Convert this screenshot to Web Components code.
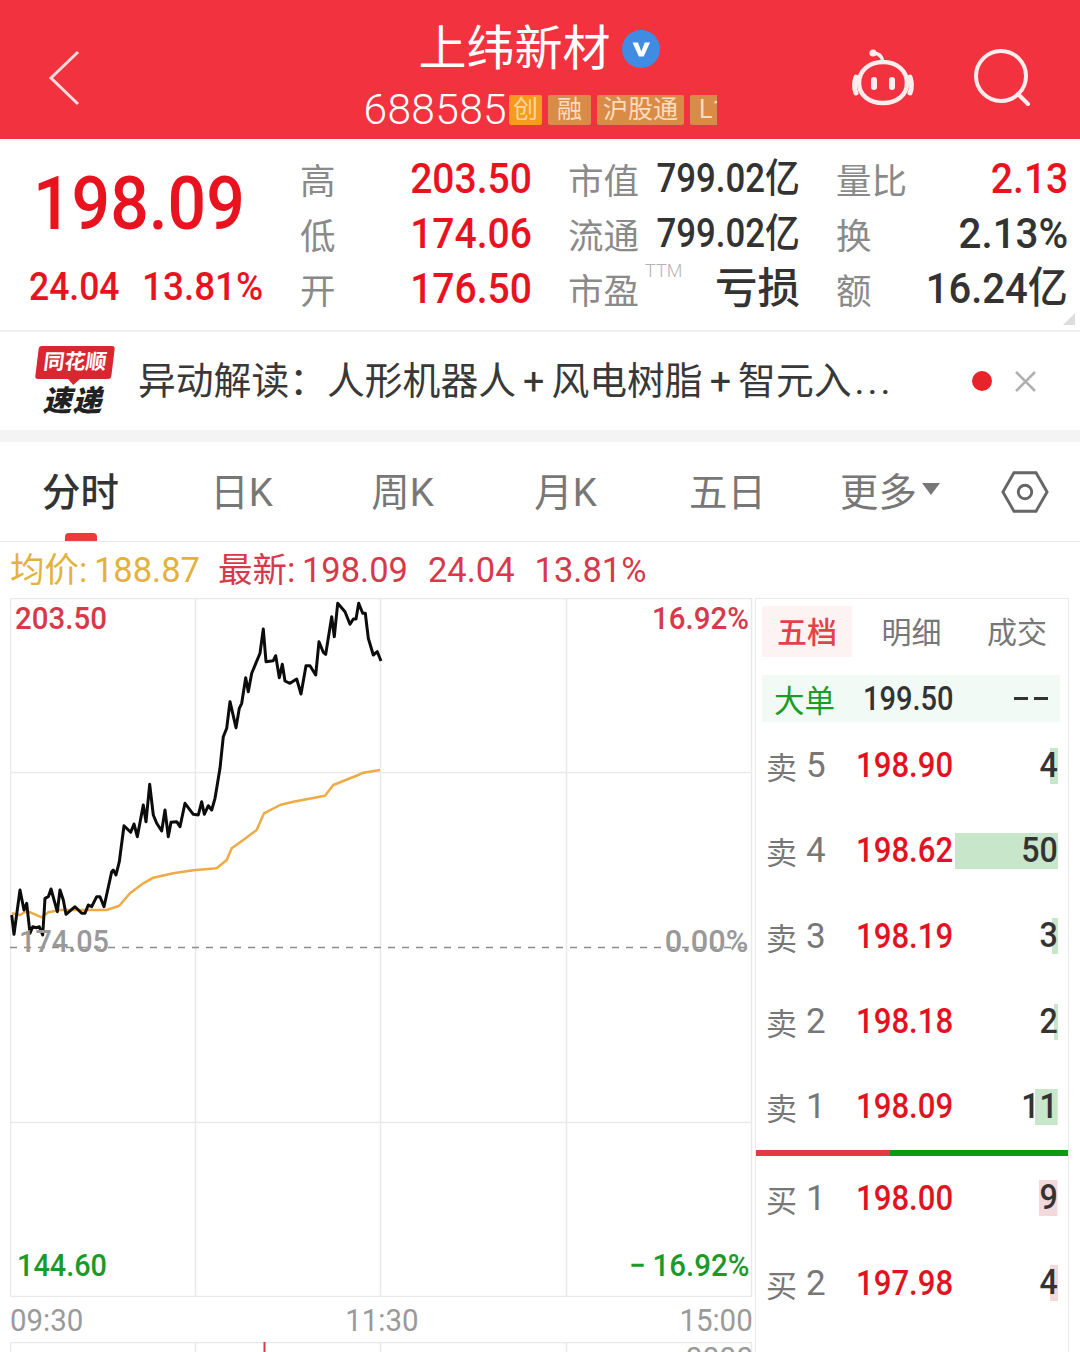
<!doctype html>
<html lang="zh">
<head>
<meta charset="utf-8">
<style>
  html, body { margin: 0; }
  body {
    width: 1080px;
    height: 1352px;
    overflow: hidden;
    background: #fff;
    font-family: Roboto, "Noto Sans CJK SC", sans-serif;
  }
  market-screen { display: block; }
</style>
</head>
<body>
<market-screen>
  <stock-header name="上纬新材" code="688585"></stock-header>
  <quote-panel>
    <quote-cell label="高" tone="up">203.50</quote-cell>
    <quote-cell label="市值" style="--value-size:40px;--value-x:.87">799.02亿</quote-cell>
    <quote-cell label="量比" tone="up" style="--value-x:.93">2.13</quote-cell>
    <quote-cell label="低" tone="up">174.06</quote-cell>
    <quote-cell label="流通" style="--value-size:40px;--value-x:.87">799.02亿</quote-cell>
    <quote-cell label="换" style="--value-x:.96">2.13%</quote-cell>
    <quote-cell label="开" tone="up">176.50</quote-cell>
    <quote-cell label="市盈" sup="TTM" style="--value-size:42.5px;--value-x:1">亏损</quote-cell>
    <quote-cell label="额" style="--value-size:43px;--value-x:.93">16.24亿</quote-cell>
  </quote-panel>
  <news-bar>异动解读：人形机器人<i>+</i>风电树脂<i>+</i>智元入<b>...</b></news-bar>
  <tab-bar></tab-bar>
  <chart-legend></chart-legend>
  <main-area>
    <time-chart slot="chart"></time-chart>
    <order-book slot="book">
      <book-row label="卖" level="5" vol="4" side="sell">198.90</book-row>
      <book-row label="卖" level="4" vol="50" side="sell">198.62</book-row>
      <book-row label="卖" level="3" vol="3" side="sell">198.19</book-row>
      <book-row label="卖" level="2" vol="2" side="sell">198.18</book-row>
      <book-row label="卖" level="1" vol="11" side="sell">198.09</book-row>
      <book-row slot="buy" label="买" level="1" vol="9" side="buy">198.00</book-row>
      <book-row slot="buy" label="买" level="2" vol="4" side="buy">197.98</book-row>
    </order-book>
  </main-area>
</market-screen>

<script>
function mount(el, html) {
  el.attachShadow({ mode: "open" }).innerHTML = html;
  return el.shadowRoot;
}

class MarketScreen extends HTMLElement {
  connectedCallback() {
    mount(this, `<style>:host{display:block}</style><slot></slot>`);
  }
}

class StockHeader extends HTMLElement {
  connectedCallback() {
    mount(this, `<style>
      :host {
        display: grid;
        grid-template-columns: 1fr auto 1fr;
        align-items: center;
        height: 139px;
        background: #f2323f;
        color: #fff;
        box-sizing: border-box;
        padding: 0 48px 0 46px;
      }
      .back { display: block; margin-top: 17px; }
      .mid { align-self: start; display: flex; flex-direction: column; align-items: center; margin-top: 26px; transform: translateX(2px); }
      .title { display: flex; align-items: center; gap: 10px; height: 46px; margin-left: -3px; }
      .title span { font-size: 48px; line-height: 46px; }
      .sub { display: flex; align-items: center; margin-top: 20px; height: 36px; width: 355px; }
      .code { font-size: 42.5px; line-height: 50px; font-weight: 300; letter-spacing: .35px; color: #fff; margin-right: 2px; }
      .tag {
        flex: none;
        height: 30px;
        margin-right: 6px;
        padding: 0 6px;
        border-radius: 2px;
        background: #d98c48;
        color: #f9dcc0;
        font-size: 25px;
        line-height: 30px;
        box-sizing: border-box;
      }
      .tag.first { background: #f79b1f; color: #fbd79c; padding: 0 4px; }
      .tag.one { padding: 0 9px; }
      /* the row runs out of room in the app, so the last tag is cut */
      .tag.clip { width: 27px; margin-right: 0; padding: 0 0 0 9px; overflow: hidden; white-space: nowrap; border-radius: 2px 0 0 2px; }
      .icons { justify-self: end; display: flex; align-items: center; gap: 58px; margin-top: 16px; }
    </style>
    <svg class="back" width="36" height="58" viewBox="0 0 36 58"><path d="M32 3 L5 29 L32 55" fill="none" stroke="#fbdcdc" stroke-width="3"/></svg>
    <div class="mid">
      <div class="title">
        <span>${this.getAttribute("name")}</span>
        <svg width="40" height="40" viewBox="0 0 40 40"><circle cx="20" cy="20" r="19" fill="#3f8ce2"/><path d="M11.5 13.5h5.5l3.3 9 3.4-9h5.3l-6.3 14h-4.8z" fill="#fff"/></svg>
      </div>
      <div class="sub">
        <span class="code">${this.getAttribute("code")}</span>
        <span class="tag first">创</span><span class="tag one">融</span><span class="tag">沪股通</span><span class="tag clip">L1</span>
      </div>
    </div>
    <div class="icons">
      <svg width="66" height="60" viewBox="0 0 66 60" fill="none" stroke="#fdeeee" stroke-width="4.5" stroke-linecap="round">
        <path d="M9 35c0-13 11-21 24-21s24 8 24 21c0 12-10 20-24 20S9 47 9 35z"/>
        <path d="M6 29c-2 6-2 11 0 16M60 29c2 6 2 11 0 16" stroke-width="5"/>
        <path d="M23 5c6 0 9 3 10 9" stroke-width="3.5"/>
        <circle cx="23" cy="5" r="3.6" fill="#fdeeee" stroke="none"/>
        <path d="M24 32v7M42 32v7" stroke-width="6"/>
      </svg>
      <svg width="58" height="58" viewBox="0 0 58 58" fill="none" stroke="#fdeeee" stroke-width="4"><circle cx="27" cy="27" r="25"/><path d="M44 45l10 10" stroke-linecap="round"/></svg>
    </div>`);
  }
}

class QuotePanel extends HTMLElement {
  connectedCallback() {
    mount(this, `<style>
      :host {
        display: grid;
        grid-template-columns: 301px 1fr;
        height: 193px;
        box-sizing: border-box;
        border-bottom: 2px solid #f0f0f0;
        position: relative;
      }
      .now { padding: 25px 0 0 29px; color: #e8131f; font-weight: 500; }
      .price { font-size: 75px; line-height: 78px; margin-left: 4px; transform: scaleX(.905); transform-origin: left; white-space: nowrap; }
      .chg { display: flex; margin-top: 25px; font-size: 39px; line-height: 40px; }
      .chg span { display: block; transform: scaleX(.945); transform-origin: left; white-space: nowrap; }
      .chg span:first-child { width: 113px; transform: scaleX(.91); }
      .grid {
        display: grid;
        grid-template-columns: 231px 231px 231px;
        column-gap: 37px;
        grid-auto-rows: 55px;
        padding-top: 12px;
      }
      .corner {
        position: absolute; right: 5px; bottom: 5px;
        width: 0; height: 0;
        border-left: 12px solid transparent;
        border-bottom: 12px solid #ddd;
      }
    </style>
    <div class="now">
      <div class="price">198.09</div>
      <div class="chg"><span>24.04</span><span>13.81%</span></div>
    </div>
    <div class="grid"><slot></slot></div>
    <div class="corner"></div>`);
  }
}

class QuoteCell extends HTMLElement {
  connectedCallback() {
    const sup = this.getAttribute("sup");
    const up = this.getAttribute("tone") === "up";
    mount(this, `<style>
      :host { display: flex; justify-content: space-between; align-items: center; min-width: 0; }
      .label { position: relative; font-size: 35.5px; line-height: 55px; color: #8a8a8a; padding-top: 7px; margin: 0 -20px 0 -1px; white-space: nowrap; }
      .sup { position: absolute; left: 77px; top: 1px; font-size: 18px; line-height: 24px; color: #b4b4b4; font-weight: 300; }
      .value {
        font-size: var(--value-size, 42px);
        line-height: 55px;
        font-weight: 500;
        color: ${up ? "#e8131f" : "#333"};
        white-space: nowrap;
        transform: scaleX(var(--value-x, .93));
        transform-origin: right;
      }
    </style>
    <span class="label">${this.getAttribute("label")}${sup ? `<span class="sup">${sup}</span>` : ""}</span>
    <span class="value"><slot></slot></span>`);
  }
}

class NewsBar extends HTMLElement {
  connectedCallback() {
    mount(this, `<style>
      :host {
        display: flex;
        align-items: center;
        height: 98px;
        box-sizing: border-box;
        padding: 0 43px 0 35px;
      }
      .logo { flex: none; width: 80px; display: flex; flex-direction: column; align-items: center; margin-right: 23px; padding-top: 2px; }
      .red {
        position: relative;
        width: 76px; height: 33px;
        background: #d9272f;
        border-radius: 3px;
        transform: skewX(-7deg);
        color: #fff;
        font-size: 21px;
        line-height: 33px;
        font-weight: 700;
        text-align: center;
        white-space: nowrap;
      }
      .red::after {
        content: "";
        position: absolute; left: 33px; bottom: -6px;
        border-left: 6px solid transparent;
        border-right: 6px solid transparent;
        border-top: 6px solid #d9272f;
      }
      .sd { font-size: 29px; line-height: 34px; font-weight: 900; font-style: italic; color: #222; margin: 5px 5px 0 0; letter-spacing: 1px; }
      .text { flex: 1; font-size: 37.8px; line-height: 48px; color: #383838; white-space: nowrap; }
      ::slotted(i) { font-style: normal; font-family: Roboto, sans-serif; margin: 0 7px; }
      ::slotted(b) { font-weight: 400; font-family: Roboto, sans-serif; letter-spacing: 3px; margin-left: 3px; }
      .dot { flex: none; width: 20px; height: 20px; border-radius: 50%; background: #e8232a; margin-right: 22px; }
    </style>
    <div class="logo"><div class="red">同花顺</div><div class="sd">速递</div></div>
    <div class="text"><slot></slot></div>
    <div class="dot"></div>
    <svg width="23" height="23" viewBox="0 0 23 23" stroke="#b0b0b0" stroke-width="2.6"><path d="M2 2l19 19M21 2L2 21"/></svg>`);
  }
}

class TabBar extends HTMLElement {
  connectedCallback() {
    const labels = ["分时", "日K", "周K", "月K", "五日"];
    mount(this, `<style>
      :host {
        display: grid;
        grid-template-columns: 161px 161px 161px 165px 159px 160px 1fr;
        align-items: center;
        height: 112px;
        box-sizing: border-box;
        border-top: 12px solid #f4f4f4;
        border-bottom: 1px solid #e8e8e8;
        font-size: 38.4px;
        color: #777;
      }
      .tab { position: relative; height: 99px; padding-bottom: 5px; box-sizing: border-box; display: flex; align-items: center; justify-content: center; }
      .on { color: #333; font-weight: 500; }
      .on::after {
        content: "";
        position: absolute; left: 65px; bottom: 0;
        width: 32px; height: 8px;
        background: #ee3a3a;
        border-radius: 4px 4px 0 0;
      }
      .more { gap: 5px; transform: translateX(3px); }
      .more i { border-left: 9px solid transparent; border-right: 9px solid transparent; border-top: 12px solid #777; }
      svg { justify-self: center; transform: translateX(1px); }
    </style>
    ${labels.map((t, i) => `<div class="tab${i ? "" : " on"}">${t}</div>`).join("")}
    <div class="tab more">更多<i></i></div>
    <svg width="48" height="44" viewBox="0 0 50 44" fill="none" stroke="#666" stroke-width="3"><path d="M2 22L13.500 2h23L48 22 36.500 42h-23z"/><circle cx="25" cy="22" r="7"/></svg>`);
  }
}

class ChartLegend extends HTMLElement {
  connectedCallback() {
    mount(this, `<style>
      :host {
        display: flex;
        align-items: center;
        height: 56px;
        padding: 0 0 0 10px;
        box-sizing: border-box;
        font-size: 34.5px;
        line-height: 50px;
        word-spacing: -2px;
        color: #d8394a;
        white-space: nowrap;
      }
      .avg { color: #e3b23c; margin-right: 18px; }
      .gap { margin-left: 20px; }
    </style>
    <span class="avg">均价: 188.87</span><span>最新: 198.09</span><span class="gap">24.04</span><span class="gap">13.81%</span>`);
  }
}

class MainArea extends HTMLElement {
  connectedCallback() {
    mount(this, `<style>
      :host { display: grid; grid-template-columns: 743px 314px; column-gap: 2px; padding-left: 10px; height: 754px; overflow: hidden; }
    </style>
    <slot name="chart"></slot><slot name="book"></slot>`);
  }
}

// traced off the picture, in 3x crop coords with origin at (0,595)
const PRICE_LINE = [35,960,42,1018,60,885,72,945,80,925,90,1015,98,995,110,998,118,995,128,1020,135,910,145,905,153,882,172,950,180,885,190,915,198,958,225,935,245,955,255,955,265,930,275,935,290,905,300,905,312,935,335,830,340,825,348,840,358,800,372,692,392,712,402,687,412,725,430,630,438,680,449,568,460,660,470,685,485,708,495,645,505,725,513,682,530,680,540,695,555,625,580,658,595,660,605,620,613,658,625,632,635,645,645,610,660,520,670,425,680,400,690,320,708,398,718,340,725,325,737,248,745,290,755,235,780,175,790,102,798,200,820,197,827,182,838,248,847,208,855,258,870,265,890,252,903,297,918,212,930,212,947,240,957,140,970,172,977,178,995,65,1003,125,1013,25,1035,50,1050,88,1060,72,1068,72,1076,25,1088,55,1096,55,1105,130,1120,180,1132,170,1143,198];
const AVG_LINE = [35,955,60,960,80,948,105,958,125,967,145,952,180,945,240,945,320,945,358,932,390,895,430,865,460,848,520,835,580,826,650,820,680,795,695,760,730,735,770,705,792,655,840,630,880,620,975,602,1000,570,1075,540,1090,533,1140,525];

function toPoints(list) {
  const out = [];
  for (let i = 0; i < list.length; i += 2) {
    out.push(`${(list[i] / 3 - 10).toFixed(1)},${(list[i + 1] / 3 - 3).toFixed(1)}`);
  }
  return out.join(" ");
}

class TimeChart extends HTMLElement {
  connectedCallback() {
    const xs = [0.5, 185.5, 370.5, 556.5, 741.5];
    const ys = [0.5, 174.5, 524.5, 698.5];
    const grid = xs.map(x => `<line x1="${x}" x2="${x}" y1="0" y2="699"/>`).join("")
      + ys.map(y => `<line x1="0" x2="742" y1="${y}" y2="${y}"/>`).join("");
    const lowerGrid = xs.map(x => `<line x1="${x}" x2="${x}" y1="0" y2="20"/>`).join("");
    mount(this, `<style>
      :host { display: block; width: 743px; }
      .plot { position: relative; height: 698px; }
      svg { display: block; }
      .label { position: absolute; font-size: 31px; line-height: 36px; font-weight: 400; white-space: nowrap; transform: scaleX(var(--sx, .95)); }
      .l { left: 5px; transform-origin: left; }
      .r { right: 4px; transform-origin: right; }
      .up { color: #d8394a; font-weight: 500; }
      .flat { color: #999; font-weight: 500; }
      .down { color: #1a9a2a; font-weight: 500; }
      .label i { font-style: normal; margin-right: 7px; }
      .axis { display: flex; justify-content: space-between; height: 46px; font-size: 32px; line-height: 48px; color: #9a9a9a; }
      .axis span { display: block; transform: scaleX(.92); }
      .axis span:first-child { transform-origin: left; }
      .axis span:last-child { transform-origin: right; }
      .lower { position: relative; height: 20px; }
      .lower span { position: absolute; right: 0; top: -1px; font-size: 30px; line-height: 34px; color: #999; }
    </style>
    <div class="plot">
      <svg width="743" height="699" viewBox="0 0 743 699">
        <g stroke="#e9e9e9" stroke-width="1.500">${grid}</g>
        <line x1="0" x2="742" y1="349.500" y2="349.500" stroke="#8c8c8c" stroke-width="1.500" stroke-dasharray="7 7"/>
        <polyline points="${toPoints(AVG_LINE)}" fill="none" stroke="#eeaa44" stroke-width="2.500" stroke-linejoin="round"/>
        <polyline points="${toPoints(PRICE_LINE)}" fill="none" stroke="#0c0c0c" stroke-width="3" stroke-linejoin="round"/>
      </svg>
      <span class="label l up" style="top:3px">203.50</span>
      <span class="label r up" style="top:3px">16.92%</span>
      <span class="label l flat" style="top:326px;left:9px;--sx:.93">174.05</span>
      <span class="label r flat" style="top:326px;right:5px;--sx:.99">0.00%</span>
      <span class="label l down" style="top:650px;left:7px;--sx:.93">144.60</span>
      <span class="label r down" style="top:650px"><i>−</i>16.92%</span>
    </div>
    <div class="axis"><span>09:30</span><span>11:30</span><span>15:00</span></div>
    <div class="lower">
      <svg width="743" height="20" viewBox="0 0 743 20">
        <g stroke="#e9e9e9" stroke-width="1.500"><line x1="0" x2="742" y1="0.500" y2="0.500"/>${lowerGrid}</g>
        <line x1="254.500" x2="254.500" y1="0" y2="20" stroke="#d8394a" stroke-width="2"/>
      </svg>
      <span>0000</span>
    </div>`);
  }
}

class OrderBook extends HTMLElement {
  connectedCallback() {
    mount(this, `<style>
      :host {
        display: block;
        height: 754px;
        box-sizing: border-box;
        border: 1.500px solid #e9e9e9;
        border-bottom: 0;
      }
      .tabs { display: grid; grid-template-columns: 97px 105px 106px; height: 51px; margin-top: 7px; padding-left: 6px; font-size: 30px; color: #777; box-sizing: border-box; }
      .tabs div { display: flex; align-items: center; justify-content: center; padding-bottom: 4px; box-sizing: border-box; }
      .tabs .on { height: 51px; width: 90px; background: #fdf3f2; color: #e6404a; font-weight: 500; }
      .big {
        display: grid;
        grid-template-columns: 89px 115px 1fr;
        align-items: center;
        height: 47px;
        margin: 18px 8px 0 6px;
        background: #f1faf4;
        box-sizing: border-box;
        padding: 0 12px;
        font-size: 30.500px;
        color: #333;
      }
      .big .g { color: #1d9a28; }
      .big .p { font-weight: 500; font-size: 33px; transform: scaleX(.88); transform-origin: left; white-space: nowrap; }
      .big .d { justify-self: end; display: flex; gap: 6px; }
      .big .d i { width: 14px; height: 3px; background: #333; }
      .rows { margin-top: 1px; }
      .bar { display: grid; grid-template-columns: 134px 1fr; height: 6px; margin-top: 1px; }
      .bar i:first-child { background: #e03a42; }
      .bar i:last-child { background: #0b9a12; }
      .buy { margin-top: -1px; }
    </style>
    <div class="tabs"><div class="on">五档</div><div>明细</div><div>成交</div></div>
    <div class="big"><span class="g">大单</span><span class="p">199.50</span><span class="d"><i></i><i></i></span></div>
    <div class="rows"><slot></slot></div>
    <div class="bar"><i></i><i></i></div>
    <div class="buy"><slot name="buy"></slot></div>`);
  }
}

class BookRow extends HTMLElement {
  connectedCallback() {
    const vol = Number(this.getAttribute("vol"));
    const tint = this.getAttribute("side") === "buy" ? "#f3d8dc" : "#c8e6ca";
    mount(this, `<style>
      :host {
        display: grid;
        grid-template-columns: 90px 96px 106px;
        align-items: center;
        height: 85.300px;
        padding-left: 10px;
        --bar-size: ${vol * 2.06}px;
      }
      .label { display: flex; align-items: center; gap: 9px; color: #777; font-size: 31px; }
      .label b { font-weight: 400; font-size: 35px; }
      .price { color: #e2131f; font-size: 35px; font-weight: 500; transform: scaleX(.89); transform-origin: left; white-space: nowrap; }
      .vol {
        display: block;
        height: 36px;
        line-height: 36px;
        text-align: right;
        color: #333;
        font-size: 35px;
        font-weight: 500;
        background: linear-gradient(${tint}, ${tint}) right / var(--bar-size) 100% no-repeat;
      }
      .vol span { display: inline-block; transform: scaleX(.92); transform-origin: right; }
    </style>
    <span class="label">${this.getAttribute("label")}<b>${this.getAttribute("level")}</b></span>
    <span class="price"><slot></slot></span>
    <span class="vol"><span>${vol}</span></span>`);
  }
}

customElements.define("market-screen", MarketScreen);
customElements.define("stock-header", StockHeader);
customElements.define("quote-panel", QuotePanel);
customElements.define("quote-cell", QuoteCell);
customElements.define("news-bar", NewsBar);
customElements.define("tab-bar", TabBar);
customElements.define("chart-legend", ChartLegend);
customElements.define("main-area", MainArea);
customElements.define("time-chart", TimeChart);
customElements.define("order-book", OrderBook);
customElements.define("book-row", BookRow);
</script>
</body>
</html>
